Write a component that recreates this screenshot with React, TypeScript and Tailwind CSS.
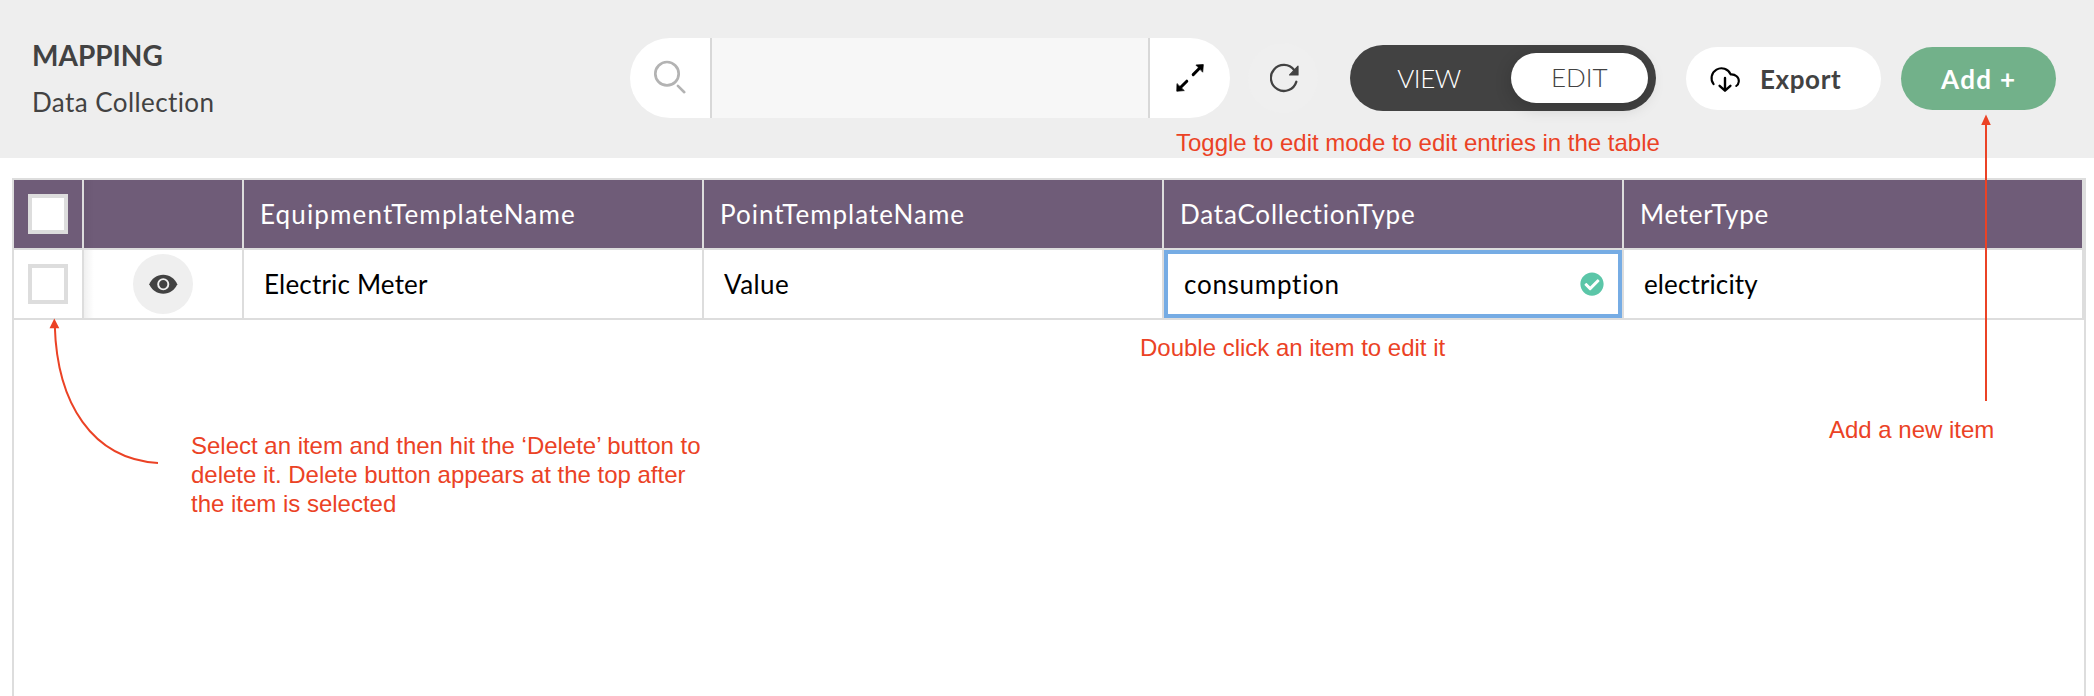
import React from "react";
import { FaCheckCircle } from "react-icons/fa";

function SearchIcon() {
  return (
    <svg width="60" height="50" viewBox="0 0 60 50" fill="none" stroke="#b3b3b3" strokeLinecap="round">
      <circle cx="27" cy="23.7" r="11.7" strokeWidth="2.7" />
      <path d="M37.9 35.9 44.3 42.2" strokeWidth="2.6" />
    </svg>
  );
}

function ExpandIcon() {
  return (
    <svg width="28" height="28" viewBox="0 0 28 28" fill="#000" stroke="#000" strokeLinecap="round" strokeLinejoin="round">
      <path d="M17.2 10.6 23.5 4.3M10.8 17.2 4.5 23.5" strokeWidth="3" />
      <path d="M20.3 1 27.3.6 26.7 7.8ZM1 20 .8 27.2 7.9 26.6Z" strokeWidth=".8" />
    </svg>
  );
}

function RefreshIcon() {
  return (
    <svg width="30" height="30" viewBox="0 0 30 30" fill="none" stroke="#424242">
      <path d="M26.3 18.8A13 13 0 1 1 24.2 7" strokeWidth="2.3" strokeLinecap="round" />
      <path d="M28 3.2V11.9H19.6Z" fill="#424242" strokeWidth="1.2" strokeLinejoin="round" />
    </svg>
  );
}

function CloudDownloadIcon() {
  return (
    <svg width="32" height="28" viewBox="0 0 32 28" fill="none" stroke="#000" strokeWidth="2.1" strokeLinecap="round" strokeLinejoin="round">
      <path d="M4.6 19.2A9.9 9.9 0 1 1 21.6 9.4C26.4 9 30.2 12.4 29.8 16.6 29.6 18.6 28.6 20 27.2 21" />
      <path d="M16 12.9V25.4M10.6 20.8 16 25.7 21.4 20.8" strokeWidth="2.4" />
    </svg>
  );
}

function EyeIcon() {
  return (
    <svg width="30.5" height="30.5" viewBox="0 0 24 24">
      <path
        fill="#424242"
        d="M12 4.5C7 4.5 2.73 7.61 1 12c1.73 4.39 6 7.5 11 7.5s9.27-3.11 11-7.5c-1.73-4.39-6-7.5-11-7.5z"
      />
      <circle cx="12" cy="12" r="4" fill="none" stroke="#efefef" strokeWidth="1.5" />
    </svg>
  );
}

function Checkbox() {
  return <div className="size-10 border-4 border-[#ddd] bg-white" />;
}

const columns = [
  { name: "EquipmentTemplateName", track: "tracking-[1.15px]" },
  { name: "PointTemplateName", track: "tracking-[1px]" },
  { name: "DataCollectionType", track: "tracking-[0.82px]" },
  { name: "MeterType", track: "tracking-[0.73px]" },
];

const note = "absolute whitespace-nowrap font-['Liberation_Sans',sans-serif] text-2xl leading-[29px] tracking-[-0.01px] text-[#eb4225]";

export default function App() {
  return (
    <div className="relative flex h-[696px] w-[2094px] flex-col overflow-hidden bg-white font-[Lato,sans-serif] text-[26px]">
      <header className="flex h-[158px] shrink-0 bg-[#eee]">
        <div className="ml-8 w-[598px] pt-[35px] text-[#424242]">
          <h1 className="mb-[7px] text-[28px] leading-10 font-bold">MAPPING</h1>
          <p className="leading-10 tracking-[0.42px]">Data Collection</p>
        </div>

        <div className="mt-[38px] flex h-20 w-[600px] overflow-hidden rounded-full bg-white">
          <div className="w-[82px] border-r-2 border-[#d8d8d8] pt-3 pl-2.5">
            <SearchIcon />
          </div>
          <div className="flex-1 bg-[#f7f7f7]" />
          <div className="w-[82px] border-l-2 border-[#d8d8d8] pt-[26px] pl-[26px]">
            <ExpandIcon />
          </div>
        </div>

        <button className="mt-[43px] ml-[18px] flex size-[70px] items-center justify-center rounded-full bg-[#efefef] pl-[3px]">
          <RefreshIcon />
        </button>

        <div className="mt-[45px] ml-8 flex h-[66px] w-[306px] items-center rounded-full bg-[#424242] pr-2 leading-[50px] font-light">
          <span className="flex-1 pr-[3px] pb-px text-center tracking-[-0.47px] text-white">VIEW</span>
          <span className="h-[50px] w-[137px] rounded-full bg-white pl-10 leading-[49px] text-[#424242] shadow-[0_4px_16px_2px_rgba(0,0,0,0.14)]">EDIT</span>
        </div>

        <button className="mt-[47px] ml-[30px] flex h-[63px] w-[195px] items-center rounded-full bg-white pl-[23px] font-bold text-[#424242]">
          <CloudDownloadIcon />
          <span className="ml-[19px] pt-px tracking-[0.61px]">Export</span>
        </button>
        <button className="mt-[47px] ml-5 h-[63px] w-[155px] rounded-full bg-[#72b18a] pt-px pl-10 text-left font-bold tracking-[1.35px] text-white">
          Add +
        </button>
      </header>

      <main className="mt-5 mr-2 ml-3 flex-1 border-2 border-b-0 border-[#ddd]">
        <div className="flex h-[70px] border-b-2 border-[#ddd] bg-[#6f5c78] text-white">
          <div className="flex w-[70px] shrink-0 items-center justify-center border-r-2 border-[#ddd]">
            <Checkbox />
          </div>
          <div className="w-40 shrink-0 border-r-2 border-[#ddd] bg-linear-to-r from-black/5 to-transparent to-[10px]" />
          {columns.map((column) => (
            <div key={column.name} className="flex w-[460px] shrink-0 items-center border-r-2 border-[#ddd] pt-px pl-4">
              <span className={column.track}>{column.name}</span>
            </div>
          ))}
        </div>

        <div className="flex h-[70px] border-b-2 border-[#ddd] text-black">
          <div className="flex w-[70px] shrink-0 items-center justify-center border-r-2 border-[#ddd]">
            <Checkbox />
          </div>
          <div className="flex w-40 shrink-0 items-center justify-center border-r-2 border-[#ddd] bg-linear-to-r from-black/6 to-transparent to-[10px]">
            <div className="flex size-[60px] items-center justify-center rounded-full bg-[#efefef]">
              <EyeIcon />
            </div>
          </div>
          <div className="flex w-[460px] shrink-0 items-center border-r-2 border-[#ddd] pt-px pl-5 tracking-[0.18px]">Electric Meter</div>
          <div className="flex w-[460px] shrink-0 items-center border-r-2 border-[#ddd] pt-px pl-5 tracking-[0.44px]">Value</div>
          <div className="w-[460px] shrink-0 border-r-2 border-[#ddd]">
            <div className="flex h-full items-center justify-between border-4 border-[#76ace4] pr-3.5 pl-4">
              <span className="pt-px tracking-[0.73px]">consumption</span>
              <FaCheckCircle size={24} color="#5bc6a8" />
            </div>
          </div>
          <div className="flex w-[460px] shrink-0 items-center border-r-2 border-[#ddd] pt-px pl-5 tracking-[0.12px]">electricity</div>
        </div>
      </main>

      <svg className="pointer-events-none absolute inset-0" width="2094" height="696" fill="none" stroke="#eb4225" strokeWidth="2">
        <path d="M1986 401V122M54.8 326C57 403 92 459 158 463" />
        <path d="M1986 114.5 1990.8 125H1981.2ZM54.3 318.5 59.3 328.2H49.5Z" fill="#eb4225" stroke="none" />
      </svg>
      <p className={`${note} top-[128px] left-[1176px]`}>Toggle to edit mode to edit entries in the table</p>
      <p className={`${note} top-[333px] left-[1140px]`}>Double click an item to edit it</p>
      <p className={`${note} top-[431px] left-[191px]`}>
        Select an item and then hit the ‘Delete’ button to
        <br />
        delete it. Delete button appears at the top after
        <br />
        the item is selected
      </p>
      <p className={`${note} top-[415px] left-[1829px]`}>Add a new item</p>
    </div>
  );
}
